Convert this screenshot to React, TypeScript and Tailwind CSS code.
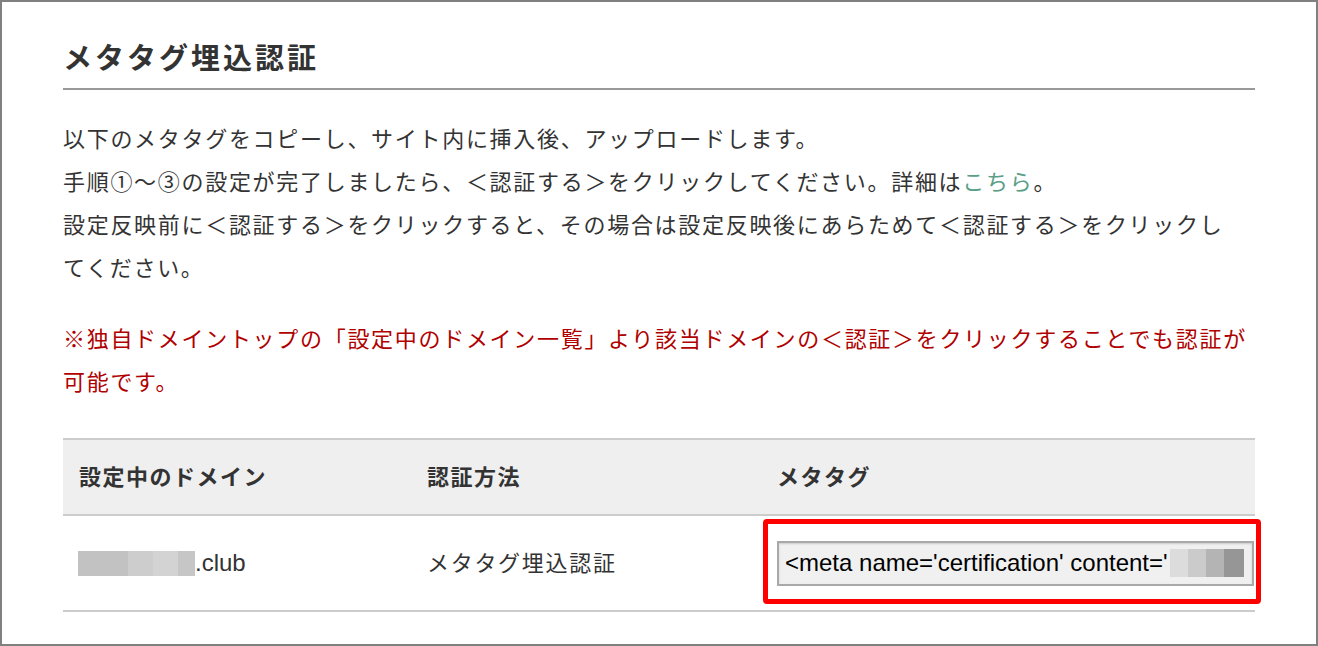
import React from "react";

const FONT = '"Liberation Sans", "Noto Sans CJK JP", sans-serif';

export default function App() {
  return (
    <div
      className="w-[1318px] h-[646px] border-2 border-[#808080] bg-white px-[61px] box-border overflow-hidden"
      style={{ fontFamily: FONT }}
    >
      <h1 className="pt-[37px] pb-[9px] border-b-2 border-[#999999] text-[29px] leading-[40px] font-bold tracking-[3px] text-[#333333]">
        メタタグ埋込認証
      </h1>

      <div className="mt-[28px] text-[22px] leading-[43px] tracking-[1.7px] text-[#333333]">
        <div className="whitespace-nowrap">以下のメタタグをコピーし、サイト内に挿入後、アップロードします。</div>
        <div className="whitespace-nowrap">
          手順①〜③の設定が完了しましたら、＜認証する＞をクリックしてください。詳細は
          <span className="text-[#5a9e88]">こちら</span>。
        </div>
        <div className="whitespace-nowrap">
          設定反映前に＜認証する＞をクリックすると、その場合は設定反映後にあらためて＜認証する＞をクリックし
        </div>
        <div className="whitespace-nowrap">てください。</div>
      </div>

      <div className="mt-[28px] text-[22px] leading-[43px] tracking-[1.7px] text-[#b00000]">
        <div className="whitespace-nowrap">
          <span className="font-bold">※</span>独自ドメイントップの「設定中のドメイン一覧」より該当ドメインの＜認証＞をクリックすることでも認証が
        </div>
        <div className="whitespace-nowrap">可能です。</div>
      </div>

      <div className="mt-[34px] border-t-2 border-[#cccccc]">
        <div className="grid grid-cols-[348px_350px_1fr] h-[76px] bg-[#efefef] border-b-2 border-[#cccccc] items-center text-[22px] font-bold tracking-[1.5px] text-[#333333]">
          <div className="pl-[16px]">設定中のドメイン</div>
          <div className="pl-[16px]">認証方法</div>
          <div className="pl-[16px]">メタタグ</div>
        </div>
        <div className="grid grid-cols-[348px_350px_1fr] h-[96px] border-b-2 border-[#cccccc] items-center text-[#333333]">
          <div className="pl-[15px] flex items-center">
            <span className="flex h-[25px]">
              <span className="w-[50px] bg-[#c2c2c2]" />
              <span className="w-[25px] bg-[#cdcdcd]" />
              <span className="w-[25px] bg-[#d3d3d3]" />
              <span className="w-[17px] bg-[#c6c6c6]" />
            </span>
            <span className="text-[24px] leading-[30px]">.club</span>
          </div>
          <div className="pl-[16px] text-[22px] tracking-[1.7px]">メタタグ埋込認証</div>
          <div className="relative h-full flex items-center pl-[16px]">
            <div className="w-[477px] h-[45px] border-2 border-[#a9a9a9] bg-[#f0f0f0] pl-[6px] flex items-center overflow-hidden whitespace-nowrap text-[24px] text-black shadow-[inset_0_1px_2px_rgba(0,0,0,0.15)]">
              <span>&lt;meta name='certification' content='</span>
              <span className="flex h-[28px] ml-[2px] shrink-0">
                <span className="w-[18px] bg-[#dcdcdc]" />
                <span className="w-[18px] bg-[#cbcbcb]" />
                <span className="w-[18px] bg-[#b4b4b4]" />
                <span className="w-[20px] bg-[#969696]" />
              </span>
            </div>
            <div className="absolute left-[2px] top-[3px] w-[498px] h-[85px] border-[5px] border-[#ff0000] rounded-[4px] pointer-events-none" />
          </div>
        </div>
      </div>
    </div>
  );
}
